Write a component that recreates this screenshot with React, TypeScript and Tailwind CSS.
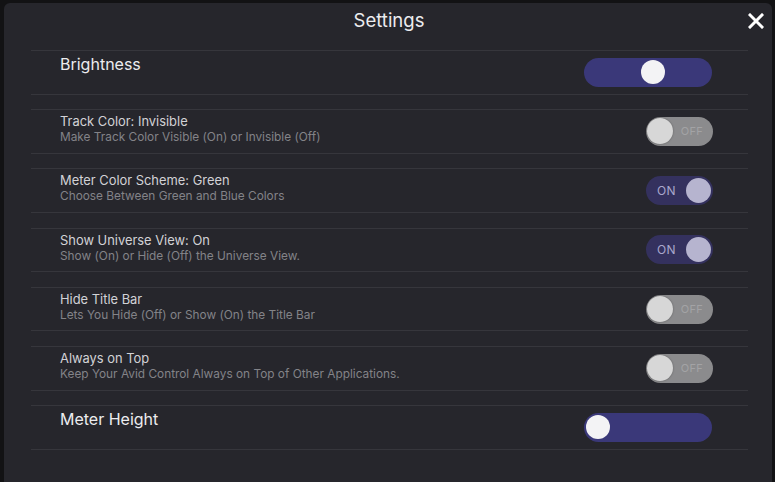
import React from "react";

const font = { fontFamily: "Inter, 'Liberation Sans', sans-serif" };

function Slider({ pos }: { pos: number }) {
  return (
    <div className="relative w-[128px] h-[29px] rounded-full bg-[#3a3879] self-center">
      <div
        className="absolute top-[2.5px] w-[24px] h-[24px] rounded-full bg-[#f3f3f5]"
        style={{ left: pos }}
      />
    </div>
  );
}

function Toggle({ on }: { on: boolean }) {
  if (on) {
    return (
      <div className="relative w-[67px] h-[29px] rounded-full bg-[#34315e] self-center flex items-center">
        <span className="ml-[11px] text-[12px] text-[#a9a7cc] tracking-[0.3px]">ON</span>
        <div className="absolute right-[2px] top-[2px] w-[25px] h-[25px] rounded-full bg-[#b6b4cf]" />
      </div>
    );
  }
  return (
    <div className="relative w-[67px] h-[29px] rounded-full bg-[#8b8b8d] self-center flex items-center justify-end">
      <span className="mr-[10px] text-[11px] text-[#a3a3a5] tracking-[0.3px]">OFF</span>
      <div className="absolute left-[1px] top-[1.5px] w-[26px] h-[26px] rounded-full bg-[#d7d7d7] shadow-[0_0_2px_rgba(0,0,0,0.35)]" />
    </div>
  );
}

const items = [
  { t: "Track Color: Invisible", s: "Make Track Color Visible (On) or Invisible (Off)", on: false },
  { t: "Meter Color Scheme: Green", s: "Choose Between Green and Blue Colors", on: true },
  { t: "Show Universe View: On", s: "Show (On) or Hide (Off) the Universe View.", on: true },
  { t: "Hide Title Bar", s: "Lets You Hide (Off) or Show (On) the Title Bar", on: false },
  { t: "Always on Top", s: "Keep Your Avid Control Always on Top of Other Applications.", on: false },
];

export default function App() {
  return (
    <div className="w-[775px] h-[482px] bg-[#121214] pt-[3px] pl-[4px] pr-[3px] overflow-hidden" style={font}>
      <div className="h-[479px] bg-[#26262c] rounded-t-[6px] flex flex-col">
        <div className="relative h-[47px] flex items-start justify-center pt-[6px]">
          <span className="text-[18.5px] leading-[22px] text-[#ececef] pl-[2px]">Settings</span>
          <svg className="absolute right-[8px] top-[10px]" width="16" height="16" viewBox="0 0 16 16">
            <path d="M2 2 L14 14 M14 2 L2 14" stroke="#ffffff" strokeWidth="3" strokeLinecap="square" />
          </svg>
        </div>
        <div className="ml-[27px] mr-[24px] flex flex-col gap-[14.6px]">
          <div className="h-[44.6px] border-y border-[#36363c] flex justify-between pl-[29px] pr-[36px]">
            <span className="pt-[3px] text-[16px] leading-[20px] text-[#ececef]">Brightness</span>
            <Slider pos={57} />
          </div>
          {items.map((it) => (
            <div key={it.t} className="h-[44.6px] border-y border-[#36363c] flex justify-between pl-[29px] pr-[35px]">
              <div className="flex flex-col pt-[3px]">
                <span className="text-[12.9px] leading-[17px] text-[#d2d2d6]">{it.t}</span>
                <span className="text-[11.85px] leading-[15px] text-[#838388]">{it.s}</span>
              </div>
              <Toggle on={it.on} />
            </div>
          ))}
          <div className="h-[44.6px] border-y border-[#36363c] flex justify-between pl-[29px] pr-[36px]">
            <span className="pt-[3px] text-[16px] leading-[20px] text-[#ececef]">Meter Height</span>
            <Slider pos={2} />
          </div>
        </div>
      </div>
    </div>
  );
}
